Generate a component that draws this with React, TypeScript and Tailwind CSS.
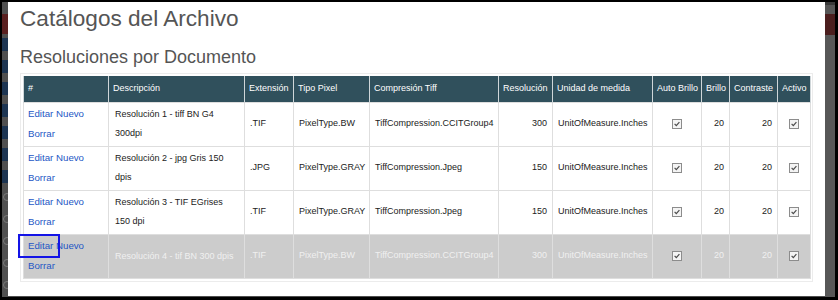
import React from "react";

type Row = {
  desc: string;
  ext: string;
  pixel: string;
  comp: string;
  res: number;
  unit: string;
  brillo: number;
  contraste: number;
  selected?: boolean;
};

const rows: Row[] = [
  { desc: "Resolución 1 - tiff BN G4 300dpi", ext: ".TIF", pixel: "PixelType.BW", comp: "TiffCompression.CCITGroup4", res: 300, unit: "UnitOfMeasure.Inches", brillo: 20, contraste: 20 },
  { desc: "Resolución 2 - jpg Gris 150 dpis", ext: ".JPG", pixel: "PixelType.GRAY", comp: "TiffCompression.Jpeg", res: 150, unit: "UnitOfMeasure.Inches", brillo: 20, contraste: 20 },
  { desc: "Resolución 3 - TIF EGrises 150 dpi", ext: ".TIF", pixel: "PixelType.GRAY", comp: "TiffCompression.Jpeg", res: 150, unit: "UnitOfMeasure.Inches", brillo: 20, contraste: 20 },
  { desc: "Resolución 4 - tif BN 300 dpis", ext: ".TIF", pixel: "PixelType.BW", comp: "TiffCompression.CCITGroup4", res: 300, unit: "UnitOfMeasure.Inches", brillo: 20, contraste: 20, selected: true },
];

const headers = [
  "#",
  "Descripción",
  "Extensión",
  "Tipo Pixel",
  "Compresión Tiff",
  "Resolución",
  "Unidad de medida",
  "Auto Brillo",
  "Brillo",
  "Contraste",
  "Activo",
];

const widths = [85, 136, 49, 76, 129, 54, 100, 49, 28, 48, 33];

const Check = () => (
  <span className="inline-flex w-[10px] h-[10px] border border-[#8c8c8c] bg-[#f4f4f4] items-center justify-center align-middle">
    <svg width="8" height="8" viewBox="0 0 8 8">
      <polyline points="1.6,3.9 3.3,5.6 6.4,2.2" fill="none" stroke="#4a4a4a" strokeWidth="1.2" />
    </svg>
  </span>
);

const App = () => {
  return (
    <div className="w-[838px] h-[300px] flex border-2 border-r-[3px] border-b-[3px] border-black bg-[#4e4e4e] overflow-hidden font-['Liberation_Sans',Arial,sans-serif]">
      {/* page behind the modal, left side */}
      <div className="w-[6px] shrink-0 flex flex-col bg-[#505050]">
        <div className="h-[12px]" />
        <div className="h-[20px] bg-[#5a2020]" />
        <div className="flex flex-col gap-[9px] pt-[4px]">
          {[0, 1, 2, 3, 4, 5, 6].map((i) => (
            <div key={i} className="h-[13px] bg-[#1d3552]" />
          ))}
        </div>
        <div className="flex flex-col gap-[14px] pt-[10px] pl-[1px]">
          {[0, 1, 2, 3, 4].map((i) => (
            <div key={i} className="w-[8px] h-[8px] rounded-full border border-[#7a7a7a]" />
          ))}
        </div>
      </div>

      {/* modal */}
      <div className="w-[817px] shrink-0 bg-white mb-[1px] pl-[12px] pt-[5px]">
        <h1 className="text-[22.6px] leading-[24px] text-[#555555] font-normal">Catálogos del Archivo</h1>
        <h2 className="mt-[16px] text-[18px] leading-[20px] text-[#555555] font-normal">Resoluciones por Documento</h2>

        <div className="mt-[6px] w-[793px] border border-[#ececec] p-[2px]">
          <table className="w-[787px] table-fixed border-collapse text-[9px]">
            <colgroup>
              {widths.map((w, i) => (
                <col key={i} style={{ width: w }} />
              ))}
            </colgroup>
            <thead>
              <tr className="h-[26px] bg-[#30505c] text-white">
                {headers.map((h) => (
                  <th key={h} className="border-x border-[#cfd6d9] font-normal text-left whitespace-nowrap px-[4px]">
                    {h}
                  </th>
                ))}
              </tr>
            </thead>
            <tbody>
              {rows.map((r, idx) => {
                const text = r.selected ? "text-[#f0f0f0]" : "text-[#222222]";
                const cell = `border border-[#dedede] px-[5px] align-middle ${text}`;
                return (
                  <tr key={idx} className={`h-[44px] ${r.selected ? "bg-[#cccccc]" : "bg-white"}`}>
                    <td className="border border-[#dedede] px-[4px] align-middle leading-[19px] relative">
                      <a className="text-[9.7px] text-[#2457c5] cursor-pointer">Editar Nuevo</a>
                      <br />
                      <a className="text-[9.7px] text-[#2457c5] cursor-pointer">Borrar</a>
                      {r.selected && (
                        <span className="absolute left-[-6px] top-[-1px] w-[42px] h-[24px] border-2 border-[#1414e6]" />
                      )}
                    </td>
                    <td className={`border border-[#dedede] pl-[6px] pr-[9px] align-middle leading-[19px] ${text}`}>{r.desc}</td>
                    <td className={cell}>{r.ext}</td>
                    <td className={`${cell} whitespace-nowrap`}>{r.pixel}</td>
                    <td className={`${cell} whitespace-nowrap`}>{r.comp}</td>
                    <td className={`${cell} text-right`}>{r.res}</td>
                    <td className={`${cell} whitespace-nowrap`}>{r.unit}</td>
                    <td className={`${cell} text-center`}>
                      <Check />
                    </td>
                    <td className={`${cell} text-right`}>{r.brillo}</td>
                    <td className={`${cell} text-right`}>{r.contraste}</td>
                    <td className={`${cell} text-center`}>
                      <Check />
                    </td>
                  </tr>
                );
              })}
            </tbody>
          </table>
        </div>
      </div>

      {/* page behind the modal, right side */}
      <div className="flex-1 flex flex-col bg-[#575757]">
        <div className="h-[3px] bg-[#3a3a3a]" />
        <div className="h-[9px]" />
        <div className="h-[21px] bg-[#4b1e1e]" />
      </div>
    </div>
  );
};

export default App;
